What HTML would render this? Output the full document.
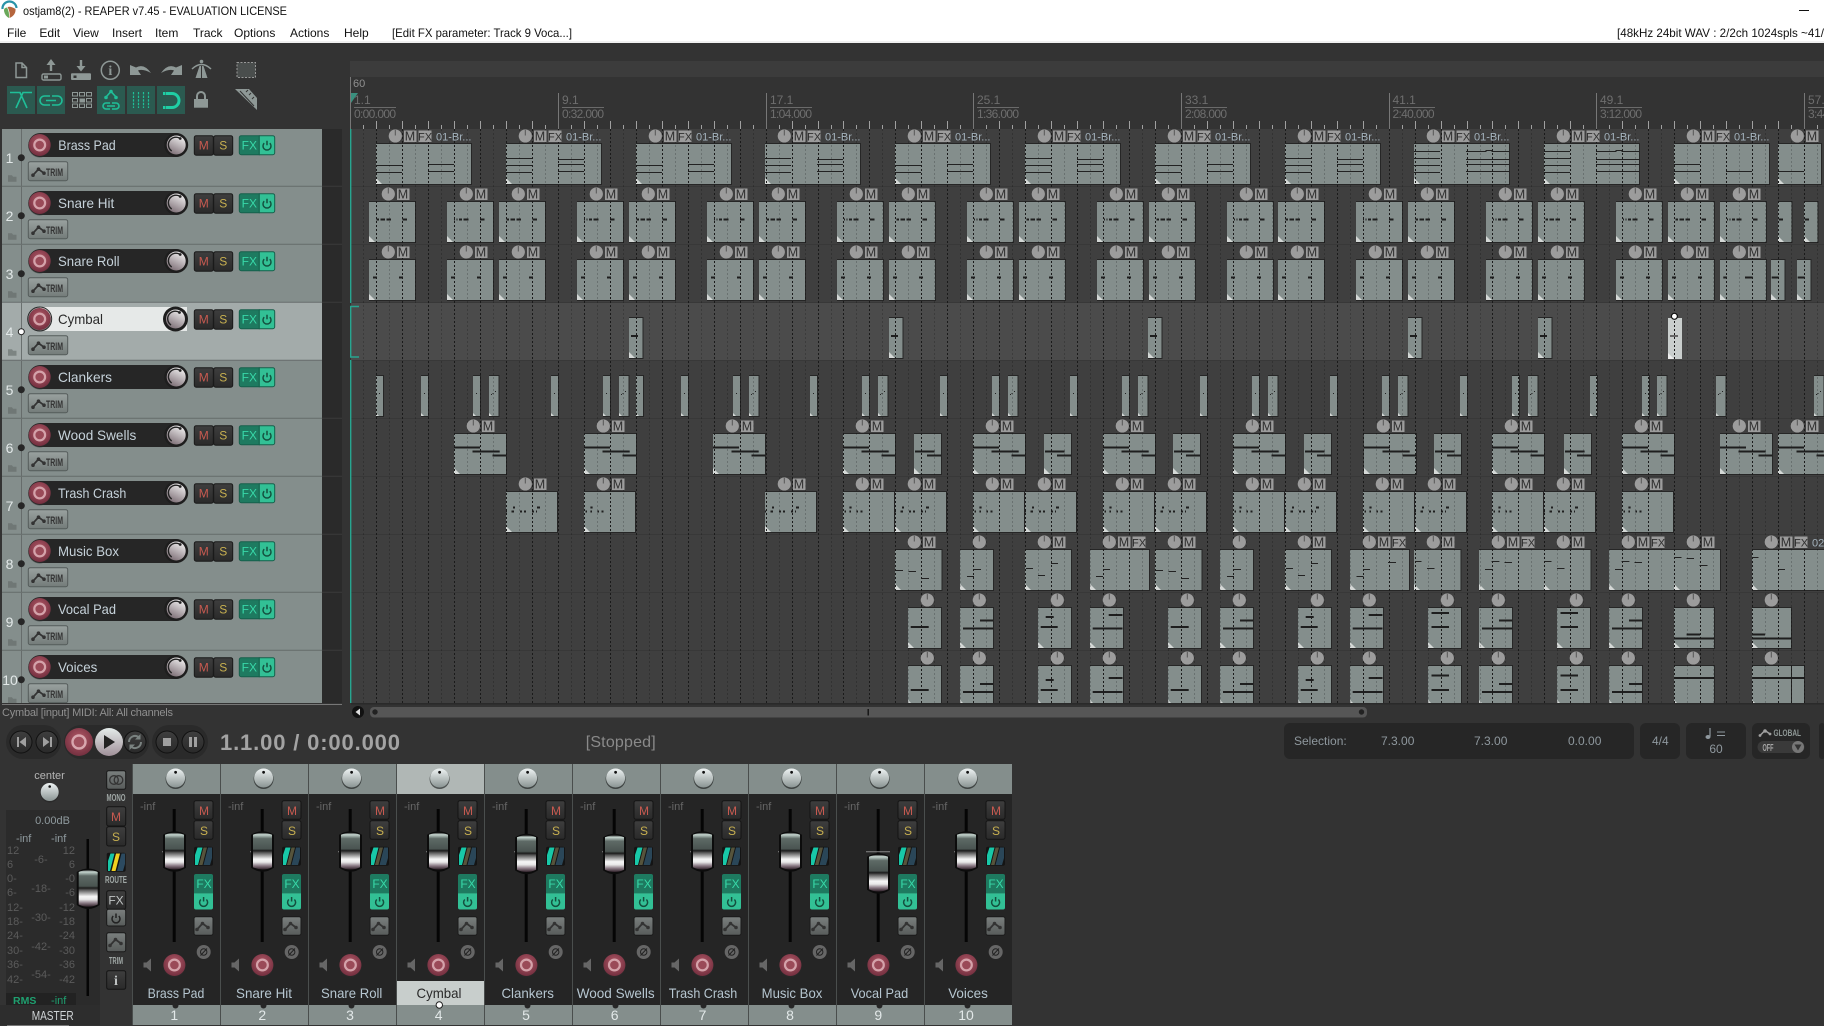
<!DOCTYPE html>
<html><head><meta charset="utf-8"><title>REAPER</title>
<style>
html,body{margin:0;padding:0;background:#333;width:1824px;height:1026px;overflow:hidden}
svg{display:block}
text{font-family:"Liberation Sans",sans-serif}
.wt{font-size:12px;fill:#111}
.b{fill:#848e8c}.d{fill:#262626}
.n1{stroke:#222;stroke-width:1;fill:none}
.n2{stroke:#1e1e1e;stroke-width:2;fill:none}
.ki{fill:#9c9c9c}
.m{font-size:12.5px;fill:#2f2f2f;text-anchor:middle}
.fx{font-size:11px;fill:#2f2f2f;text-anchor:middle}
.lb{font-size:11px;fill:#a3b2bc}
.rl{font-size:12px;fill:#6e6e6e}
.nm{font-size:14px;fill:#c6d2da}
.tn{font-size:14px;fill:#e2e8e8;text-anchor:middle}
.tm{font-size:12px;fill:#c85a50;text-anchor:middle}
.ts{font-size:12px;fill:#c8b050;text-anchor:middle}
.tf{font-size:12px;fill:#38d8a8;text-anchor:middle}
.tr{font-size:11px;fill:#333;font-weight:bold}
.inf{font-size:11px;fill:#666}
.cn{font-size:14px;fill:#b6c6d0;text-anchor:middle}
.sc{font-size:11px;fill:#5b5b5b}
.gy{fill:#8e9896}
.gs{fill:none;stroke:#8e9896;stroke-width:1.5}
.te{fill:none;stroke:#1fbf98;stroke-width:1.6}
.tb{fill:#2b5a50}
.lab{font-size:10px;font-weight:bold;fill:#a0a8a6;text-anchor:middle}
.sel{font-size:12px;fill:#8f989e}
</style></head><body>
<svg width="1824" height="1026" viewBox="0 0 1824 1026">
<defs>
<linearGradient id="kn" x1="0" y1="0" x2="0" y2="1"><stop offset="0" stop-color="#eef3f3"/><stop offset="1" stop-color="#8a9493"/></linearGradient>
<linearGradient id="kt" x1="0.8" y1="0" x2="0.3" y2="1"><stop offset="0" stop-color="#f4f4f4"/><stop offset="1" stop-color="#7d6f76"/></linearGradient>
<radialGradient id="rc" cx=".5" cy=".4" r=".65"><stop offset="0" stop-color="#b45a68"/><stop offset="1" stop-color="#6e2c3c"/></radialGradient>
<linearGradient id="bt" x1="0" y1="0" x2="0" y2="1"><stop offset="0" stop-color="#3e3e3e"/><stop offset="1" stop-color="#2a2a2a"/></linearGradient>
<linearGradient id="tg" x1="0" y1="0" x2="0" y2="1"><stop offset="0" stop-color="#9aa2a0"/><stop offset="1" stop-color="#747c7a"/></linearGradient>
<linearGradient id="fd" x1="0" y1="0" x2="0" y2="1">
<stop offset="0" stop-color="#222"/><stop offset=".05" stop-color="#c8d8d2"/><stop offset=".16" stop-color="#5e6a66"/><stop offset=".44" stop-color="#4a5451"/><stop offset=".49" stop-color="#1c1c1c"/><stop offset=".54" stop-color="#555"/><stop offset=".72" stop-color="#f6f6f6"/><stop offset=".8" stop-color="#e8e8e8"/><stop offset=".9" stop-color="#8a7a84"/><stop offset="1" stop-color="#2e2028"/></linearGradient>
<linearGradient id="pl" x1="0" y1="0" x2="0" y2="1"><stop offset="0" stop-color="#e4ecea"/><stop offset="1" stop-color="#a09099"/></linearGradient>
<linearGradient id="gb" x1="0" y1="0" x2="0" y2="1"><stop offset="0" stop-color="#7a7f7e"/><stop offset="1" stop-color="#585c5b"/></linearGradient>
<clipPath id="ca"><rect x="351" y="129" width="1473" height="574"/></clipPath>
<clipPath id="cl"><rect x="0" y="129" width="342" height="574"/></clipPath>
<clipPath id="rt"><rect x="351" y="121" width="1473" height="8"/></clipPath>
<clipPath id="rs"><rect x="351" y="125" width="1473" height="4"/></clipPath>
<clipPath id="gc"><rect x="351" y="129" width="1473" height="574"/></clipPath>
<clipPath id="ce"><rect x="351" y="77" width="1473" height="60"/></clipPath>
<clipPath id="hr"><rect x="351" y="129" width="1473" height="14"/><rect x="351" y="187" width="1473" height="14"/><rect x="351" y="245" width="1473" height="14"/><rect x="351" y="419" width="1473" height="14"/><rect x="351" y="477" width="1473" height="14"/><rect x="351" y="535" width="1473" height="14"/><rect x="351" y="593" width="1473" height="14"/><rect x="351" y="651" width="1473" height="14"/></clipPath>

<path id="gm" d="M376.5 121V703M402.5 121V703M428.5 121V703M454.5 121V703M480.5 121V703M506.5 121V703M532.5 121V703M558.5 121V703M584.5 121V703M610.5 121V703M636.5 121V703M662.5 121V703M688.5 121V703M714.5 121V703M740.5 121V703M766.5 121V703M792.5 121V703M818.5 121V703M843.5 121V703M869.5 121V703M895.5 121V703M921.5 121V703M947.5 121V703M973.5 121V703M999.5 121V703M1025.5 121V703M1051.5 121V703M1077.5 121V703M1103.5 121V703M1129.5 121V703M1155.5 121V703M1181.5 121V703M1207.5 121V703M1233.5 121V703M1259.5 121V703M1285.5 121V703M1311.5 121V703M1337.5 121V703M1363.5 121V703M1389.5 121V703M1415.5 121V703M1441.5 121V703M1467.5 121V703M1492.5 121V703M1518.5 121V703M1544.5 121V703M1570.5 121V703M1596.5 121V703M1622.5 121V703M1648.5 121V703M1674.5 121V703M1700.5 121V703M1726.5 121V703M1752.5 121V703M1778.5 121V703M1804.5 121V703" fill="none"/>
<path id="gh" d="M363.5 121V703M389.5 121V703M415.5 121V703M441.5 121V703M467.5 121V703M493.5 121V703M519.5 121V703M545.5 121V703M571.5 121V703M597.5 121V703M623.5 121V703M649.5 121V703M675.5 121V703M701.5 121V703M727.5 121V703M753.5 121V703M779.5 121V703M805.5 121V703M831.5 121V703M856.5 121V703M882.5 121V703M908.5 121V703M934.5 121V703M960.5 121V703M986.5 121V703M1012.5 121V703M1038.5 121V703M1064.5 121V703M1090.5 121V703M1116.5 121V703M1142.5 121V703M1168.5 121V703M1194.5 121V703M1220.5 121V703M1246.5 121V703M1272.5 121V703M1298.5 121V703M1324.5 121V703M1350.5 121V703M1376.5 121V703M1402.5 121V703M1428.5 121V703M1454.5 121V703M1480.5 121V703M1505.5 121V703M1531.5 121V703M1557.5 121V703M1583.5 121V703M1609.5 121V703M1635.5 121V703M1661.5 121V703M1687.5 121V703M1713.5 121V703M1739.5 121V703M1765.5 121V703M1791.5 121V703M1817.5 121V703" fill="none"/>

<path id="c" d="M0 41V35L6 41Z" fill="#d4d8d6"/>
<g id="K"><circle class="ki" cx="19.3" cy="-7" r="6.5"/><path d="M19.3-13V-7.5" stroke="#555" fill="none"/></g>
<g id="H"><use href="#K"/><rect class="ki" x="28" y="-12.5" width="12.5" height="11.5"/></g>
<g id="F"><use href="#H"/><rect class="ki" x="42.5" y="-12.5" width="13" height="11.5"/></g>

<!-- track 1 -->
<g id="a1"><rect class="d" width="96" height="42"/><rect class="b" y="1" width="95" height="40"/><use href="#c"/><path class="n1" d="M0 22.5H26M0 29.5H26M52 21.5H78M52 28.5H78"/><use href="#F"/></g>
<g id="b1"><rect class="d" width="96" height="42"/><rect class="b" y="1" width="95" height="40"/><use href="#c"/><path class="n1" d="M0 15.5H26M0 22.5H26M0 29.5H26M52 16.5H78M52 21.5H78M52 28.5H78"/><use href="#F"/></g>
<g id="c1"><rect class="d" width="96" height="42"/><rect class="b" y="1" width="95" height="40"/><use href="#c"/><path class="n1" d="M0 8.5H26M0 15.5H26M0 22.5H26M0 29.5H26M52 8.5H72V7.5H78V8.5H95M52 16.5H95M52 21.5H95M52 28.5H95"/><use href="#F"/></g>
<g id="d1"><rect class="d" width="96" height="42"/><rect class="b" y="1" width="95" height="40"/><use href="#c"/><path class="n1" d="M0 21.5H26M0 28.5H26M52 28.5H78"/><use href="#F"/></g>
<g id="e1"><rect class="d" width="44" height="42"/><rect class="b" y="1" width="43" height="40"/><use href="#c"/><path class="n1" d="M0 28.5H26"/><use href="#H"/></g>
<!-- track 2 -->
<g id="a2"><rect class="d" width="47" height="42"/><rect class="b" y="1" width="46" height="40"/><use href="#c"/><path class="n2" d="M7.5 18.5H10M11.5 18.5H16M17.5 18.5H22M33.5 18.5H38"/><use href="#H"/></g>
<g id="b2"><rect class="d" width="47" height="42"/><rect class="b" y="1" width="46" height="40"/><use href="#c"/><path class="n2" d="M7 18.5H8M9.5 18.5H10.5M12 18.5H15M16.5 18.5H21.5M33 18.5H37.5"/><use href="#H"/></g>
<g id="s2"><rect class="d" width="14.5" height="42"/><rect class="b" y="1" width="13.5" height="40"/><use href="#c"/><path class="n2" d="M.7 18.5H5"/></g>
<!-- track 3 -->
<g id="a3"><rect class="d" width="47" height="42"/><rect class="b" y="1" width="46" height="40"/><use href="#c"/><path class="n2" d="M4 18.5H8M30 18.5H34"/><use href="#H"/></g>
<g id="c3"><rect class="d" width="47" height="42"/><rect class="b" y="1" width="46" height="40"/><use href="#c"/><path class="n2" d="M3.3 18.5H7M25 18.5H32.7"/><use href="#H"/></g>
<g id="s3"><rect class="d" width="14.5" height="42"/><rect class="b" y="1" width="13.5" height="40"/><use href="#c"/><path class="n2" d="M.7 18.5H7.7"/></g>
<!-- track 4 -->
<g id="a4"><rect class="d" width="14.5" height="42"/><rect class="b" y="1" width="13.5" height="40"/><use href="#c"/><path class="n2" d="M2 19H9"/></g>
<!-- track 5 -->
<g id="s5"><rect class="d" width="8" height="42"/><rect class="b" y="1" width="7" height="40"/><path d="M0 41V38L3 41Z" fill="#d4d8d6"/><path class="n1" d="M3.5 18V19"/></g>
<g id="w5"><rect class="d" width="10.5" height="42"/><rect class="b" y="1" width="9.5" height="40"/><path d="M0 41V38L3 41Z" fill="#d4d8d6"/><path class="n1" d="M2 19.5H3M4 19V18M6 16.5H7"/></g>
<!-- track 6 -->
<g id="a6"><rect class="d" width="53" height="42"/><rect class="b" y="1" width="52" height="40"/><use href="#c"/><path class="n2" d="M0 14.5H26M18.5 18.5H45.7M38.5 22.5H52"/><use href="#H"/></g>
<g id="s6"><rect class="d" width="28" height="42"/><rect class="b" y="1" width="27" height="40"/><use href="#c"/><path class="n2" d="M1 18.5H20.6M13 22.5H27"/></g>
<!-- track 7 -->
<g id="a7"><rect class="d" width="52" height="42"/><rect class="b" y="1" width="51" height="40"/><use href="#c"/><path class="n2" d="M0 20.5H1M5.5 20.5H8M7 16.5H9M14 20.5H16M18 20.5H20M26 20.5H28M31 16.5H34M30 20.5H31"/><use href="#H"/></g>
<g id="b7"><rect class="d" width="52" height="42"/><rect class="b" y="1" width="51" height="40"/><use href="#c"/><path class="n2" d="M1.5 20.5H3M6.4 20.5H8M6.4 16.5H8.6M13.4 20.5H15M17.5 20.5H19.5"/><use href="#H"/></g>
<!-- track 8 -->
<g id="p8"><rect class="d" width="47.5" height="42"/><rect class="b" y="1" width="46.5" height="40"/><use href="#c"/><path class="n1" d="M1 21.5H8M13.5 22.5H21M27 29.5H34"/><use href="#H"/></g>
<g id="q8"><rect class="d" width="34" height="42"/><rect class="b" y="1" width="33" height="40"/><use href="#c"/><path class="n1" d="M7 27.5H14M14 20.5H21"/><use href="#K"/></g>
<g id="r8"><rect class="d" width="47" height="42"/><rect class="b" y="1" width="46" height="40"/><use href="#c"/><path class="n1" d="M1 19.5H8M13 26.5H20M26 14.5H33"/><use href="#H"/></g>
<g id="u8"><rect class="d" width="60" height="42"/><rect class="b" y="1" width="59" height="40"/><use href="#c"/><path class="n1" d="M6 27.5H13M13 20.5H20"/><use href="#F"/></g>
<g id="v8"><rect class="d" width="60" height="42"/><rect class="b" y="1" width="59" height="40"/><use href="#c"/><path class="n1" d="M6.5 27.5H13.5M13 20.5H20M38 13.5H46"/><use href="#F"/></g>
<g id="t8"><rect class="d" width="47.5" height="42"/><rect class="b" y="1" width="46.5" height="40"/><use href="#c"/><path class="n1" d="M1 12.5H7.5M13 19.5H20.5"/><use href="#H"/></g>
<g id="x8"><rect class="d" width="66" height="42"/><rect class="b" y="1" width="65" height="40"/><use href="#c"/><path class="n1" d="M6 20.5H14M12.6 12.5H20.4M25.5 13.5H33"/><use href="#F"/></g>
<g id="y8"><rect class="d" width="47" height="42"/><rect class="b" y="1" width="46" height="40"/><use href="#c"/><path class="n1" d="M0 8.5H7.5M12.6 9.5H20M25.5 16.5H33.5"/><use href="#H"/></g>
<g id="z8"><rect class="d" width="81" height="42"/><rect class="b" y="1" width="80" height="40"/><use href="#c"/><path class="n1" d="M0 8.5H6.5M26 20.5H33"/><use href="#F"/></g>
<!-- track 9 -->
<rect id="f33" width="34" height="42" class="d"/>
<g id="A9"><use href="#f33"/><rect class="b" y="1" width="33" height="40"/><use href="#c"/><path class="n2" d="M2.7 20H20.7"/><use href="#K"/></g>
<g id="B9"><use href="#f33"/><rect class="b" y="1" width="33" height="40"/><use href="#c"/><path class="n2" d="M20 13.5H33M3 21.5H33"/><use href="#K"/></g>
<g id="C9"><use href="#f33"/><rect class="b" y="1" width="33" height="40"/><use href="#c"/><path class="n2" d="M7.7 10H15.7M2.7 20H19.7"/><use href="#K"/></g>
<g id="D9"><use href="#f33"/><rect class="b" y="1" width="33" height="40"/><use href="#c"/><path class="n2" d="M18.7 8H32.5M2.7 21.5H32.5"/><use href="#K"/></g>
<g id="E9"><use href="#f33"/><rect class="b" y="1" width="33" height="40"/><use href="#c"/><path class="n2" d="M3.5 6H21M3.5 20H21"/><use href="#K"/></g>
<g id="F9"><rect class="d" width="41" height="42"/><rect class="b" y="1" width="40" height="40"/><use href="#c"/><path class="n2" d="M12.6 27.5H26M0 31.5H40"/><use href="#K"/></g>
<g id="G9"><rect class="d" width="40" height="42"/><rect class="b" y="1" width="39" height="40"/><use href="#c"/><path class="n2" d="M0 27.5H13M0 31.5H39"/><use href="#K"/></g>
<!-- track 10 -->
<g id="A0"><use href="#f33"/><rect class="b" y="1" width="33" height="40"/><use href="#c"/><path class="n2" d="M2.7 25H20.7"/><use href="#K"/></g>
<g id="B0"><use href="#f33"/><rect class="b" y="1" width="33" height="40"/><use href="#c"/><path class="n2" d="M20 19H33M3 27H33"/><use href="#K"/></g>
<g id="C0"><use href="#f33"/><rect class="b" y="1" width="33" height="40"/><use href="#c"/><path class="n2" d="M7.7 15H15.7M2.7 25H19.7"/><use href="#K"/></g>
<g id="D0"><use href="#f33"/><rect class="b" y="1" width="33" height="40"/><use href="#c"/><path class="n2" d="M18.7 13H32.5M2.7 27H32.5"/><use href="#K"/></g>
<g id="E0"><use href="#f33"/><rect class="b" y="1" width="33" height="40"/><use href="#c"/><path class="n2" d="M3.5 10.5H21M3.5 25H21"/><use href="#K"/></g>
<g id="F0"><rect class="d" width="41" height="42"/><rect class="b" y="1" width="40" height="40"/><use href="#c"/><path class="n2" d="M0 13H40"/><use href="#K"/></g>
<g id="G0"><rect class="d" width="53" height="42"/><rect class="b" y="1" width="52" height="40"/><use href="#c"/><path class="n2" d="M0 13H52"/><path d="M39.5 1V41" stroke="#222" fill="none"/><use href="#K"/></g>

<g id="rec"><circle r="11.5" fill="#2a2a2a" opacity=".5" cy="1"/><circle r="11" fill="url(#rc)"/><circle r="5.4" fill="#9a4a58" stroke="#d4a2aa" stroke-width="2.2"/></g>
<g id="tk"><circle r="12" fill="#1e1e1e"/><circle r="9.5" fill="url(#kt)"/><path d="M-4.5 6A7.5 7.5 0 0 1 4-6.5" fill="none" stroke="#222" stroke-width="1.4"/><circle cx="4" cy="-6.5" r="1.4" fill="#222"/></g>
<path id="pw" d="M-2.8-2.5A4 4 0 1 0 2.8-2.5M0-5V-.5" fill="none" stroke-width="1.5"/>
<g id="ti"><path d="M-6.5 3.5L-1 -2.5L4.5 1.5" fill="none" stroke="#333" stroke-width="1.8"/><circle cx="-6.5" cy="3.5" r="1.8" fill="#333"/><circle cx="-1" cy="-2.5" r="1.8" fill="#333"/><circle cx="4.5" cy="1.5" r="1.8" fill="#333"/></g>

<!-- TCP row -->
<g id="r">
<rect x="2" width="320" height="58" fill="#848e8c"/>
<path d="M2 57.5H322M21.5 0V57" stroke="#666c6b" fill="none"/>
<path d="M322 57.5H342" stroke="#3a3a3a"/>
<rect x="28.3" y="4.3" width="159.4" height="24" rx="12" fill="#262626"/>
<use href="#rec" x="39.7" y="16.3"/>
<use href="#tk" x="176.2" y="16.3"/>
<rect x="194.3" y="7" width="19" height="19.5" rx="2" fill="url(#bt)" stroke="#1a1a1a"/>
<rect x="213.7" y="7" width="19" height="19.5" rx="2" fill="url(#bt)" stroke="#1a1a1a"/>
<path d="M239.3 9a2 2 0 0 1 2-2H259.3V26H241.3a2 2 0 0 1-2-2Z" fill="#1e7a60" stroke="#17604c"/>
<path d="M259.3 7H272.7a2 2 0 0 1 2 2V24a2 2 0 0 1-2 2H259.3Z" fill="#32c095" stroke="#17604c"/>
<use href="#pw" x="267" y="17" stroke="#14503f"/>
<rect x="28.3" y="33" width="39.4" height="19" rx="2" fill="url(#tg)" stroke="#555c5b"/>
<use href="#ti" x="39.5" y="43"/>
<circle cx="21.3" cy="29" r="3.5" fill="#262626"/>
<path d="M8 53V46.5H12L13 48H16.5V53Z" fill="#6f7775"/>
</g>

<!-- Mixer channel -->
<g id="ch">
<rect width="88" height="30" y="764" fill="#848e8c"/>
<rect width="88" height="211" y="794" fill="#252525"/>
<rect width="88" height="20" y="1005" fill="#848e8c"/>
<path d="M.5 764V1025" stroke="#4a4e4d" fill="none"/>
<circle cx="43.6" cy="779" r="10" fill="#3f4443"/><circle cx="43.6" cy="778" r="9.5" fill="url(#kn)"/><circle cx="43.6" cy="772.3" r="1.4" fill="#111"/>
<rect x="40.7" y="809" width="3" height="133" fill="#050505"/>
<path d="M30 851.7H54" stroke="#888" fill="none"/>
<rect x="62" y="800.7" width="19" height="18.6" rx="2" fill="url(#bt)" stroke="#141414"/>
<rect x="62" y="820.7" width="19" height="18.6" rx="2" fill="url(#bt)" stroke="#141414"/>
<rect x="62" y="846.7" width="19" height="19" rx="2" fill="#141414"/>
<path d="M63 865V855L65.5 847.5H70.5L66 865Z" fill="#18c8a8"/><path d="M67 865L71.5 847.5H75L70.5 865Z" fill="#56543c"/><path d="M71.5 865L76 847.5H80V858L78 865Z" fill="#2a4658"/>
<path d="M62 876a2 2 0 0 1 2-2H79a2 2 0 0 1 2 2V893.3H62Z" fill="#1e7a60"/>
<path d="M62 893.3H81V907.5a2 2 0 0 1-2 2H64a2 2 0 0 1-2-2Z" fill="#32c095"/>
<use href="#pw" x="71.6" y="902" stroke="#14503f"/>
<rect x="62" y="916.7" width="19" height="18.6" rx="2" fill="url(#gb)" stroke="#1a1a1a"/>
<use href="#ti" x="71.5" y="926"/>
<circle cx="71.7" cy="952" r="7" fill="#666"/><circle cx="71.7" cy="952" r="3.2" fill="none" stroke="#222"/><path d="M68.5 955.5L75 948.5" stroke="#222"/>
<path d="M11.5 962.5H14.5L19 958.5V971.5L14.5 967.5H11.5Z" fill="#666"/>
<use href="#rec" x="42.4" y="965"/>
<circle cx="43.5" cy="1005.5" r="3" fill="#262626"/>
</g>
<g id="fc"><path d="M-1 4Q10.5-3 22 4V37Q10.5 45 -1 37Z" fill="#0c0c0c"/><path d="M1 4Q10.5 0 20 4V36.5Q10.5 41 1 36.5Z" fill="url(#fd)"/></g>
<g id="bd"><circle r="11.5" fill="#111"/><circle r="10.5" fill="url(#bt)"/></g>
</defs>

<rect width="1824" height="1026" fill="#333"/>
<!-- title/menu -->
<rect width="1824" height="41" fill="#fff"/><rect y="41" width="1824" height="2" fill="#f0f0f0"/>
<path d="M7 7.5Q3.5 8 4 11Q5 16 9 18Q9.5 12 7 7.5Z" fill="#6aa85a"/><path d="M9.5 18Q16 15 15.5 9Q11 6 7.5 7Q10.5 12 9.5 18Z" fill="#b5653d"/><path d="M2.5 9A7 7 0 0 1 16.5 8" fill="none" stroke="#2a93a8" stroke-width="2.2"/>
<text class="wt" x="23" y="15" textLength="264" lengthAdjust="spacingAndGlyphs">ostjam8(2) - REAPER v7.45 - EVALUATION LICENSE</text>
<text class="wt" x="7" y="37">File</text><text class="wt" x="39.4" y="37">Edit</text><text class="wt" x="73" y="37">View</text><text class="wt" x="112" y="37">Insert</text><text class="wt" x="155" y="37">Item</text><text class="wt" x="193" y="37">Track</text><text class="wt" x="234" y="37">Options</text><text class="wt" x="290" y="37">Actions</text><text class="wt" x="344" y="37">Help</text>
<text class="wt" x="392" y="37" textLength="180" lengthAdjust="spacingAndGlyphs">[Edit FX parameter: Track 9 Voca...]</text>
<text class="wt" x="1617" y="37" textLength="207" lengthAdjust="spacingAndGlyphs">[48kHz 24bit WAV : 2/2ch 1024spls ~41/</text>
<rect x="1799" y="10" width="10" height="1" fill="#111"/>

<!-- toolbar -->
<g>
<path class="gs" d="M16 63H22L26.5 67.5V77.5H16ZM22 63V67.5H26.5"/>
<path class="gy" d="M51 59L55.5 65H52.2V71H49.8V65H46.5Z"/><rect x="42" y="74" width="19" height="6" rx="1.5" fill="none" stroke="#8e9896" stroke-width="1.4"/><rect x="44" y="75.5" width="4" height="3" fill="#8e9896"/>
<path class="gy" d="M79.8 60H82.2V66H85.5L81 71.5L76.5 66H79.8Z"/><rect class="gy" x="71" y="73.3" width="20" height="6.7" rx="1"/><rect x="73.5" y="75.5" width="3" height="2.5" fill="#333"/>
<circle class="gs" cx="110.3" cy="70.3" r="9"/><text x="110.3" y="75" font-size="14" font-weight="bold" fill="#8e9896" text-anchor="middle" style="font-family:'Liberation Serif',serif">i</text>
<path class="gy" d="M130 65L136 67.5Q144 63 151 73Q143 68.5 138 70.5L141 75H130Z"/>
<path class="gy" d="M182 65L176 67.5Q168 63 161 73Q169 68.5 174 70.5L171 75H182Z"/>
<circle class="gy" cx="201.5" cy="61.5" r="1.8"/><path class="gs" d="M192 69Q201.5 60 211 69"/><path class="gy" d="M195.5 78L199.5 66H201V78ZM202 78V66H203.5L207.5 78Z"/>
<rect x="237" y="62.5" width="18.5" height="15" fill="#4a4e4d" stroke="#999" stroke-dasharray="2 1.5"/>
<rect class="tb" x="7" y="86" width="28" height="28"/><rect class="tb" x="37" y="86" width="28" height="28"/><rect class="tb" x="97" y="86" width="28" height="28"/><rect class="tb" x="127" y="86" width="28" height="28"/><rect class="tb" x="157" y="86" width="28" height="28"/>
<path class="te" d="M10 92.5H20L27 108M32 92.5H23L16 108"/>
<path class="te" d="M50 96H44.5a4.5 4.5 0 0 0 0 9H50M52 96H57.5a4.5 4.5 0 0 1 0 9H52M46 100.5H56"/>
<path fill="none" stroke="#8e9896" d="M72.5 92.5h5v3.5h-5zM79.5 92.5h5v3.5h-5zM86.5 92.5h5v3.5h-5zM72.5 98.5h5v3.5h-5zM86.5 98.5h5v3.5h-5zM72.5 104h5v3.5h-5zM79.5 104h5v3.5h-5zM86.5 104h5v3.5h-5z"/><rect class="gy" x="79.5" y="98.5" width="5.5" height="4"/>
<path class="te" d="M106 97L111 91.5L116 97"/><circle cx="106" cy="97.5" r="1.8" fill="#1fbf98"/><circle cx="111" cy="91.5" r="1.8" fill="#1fbf98"/><circle cx="116" cy="97.5" r="1.8" fill="#1fbf98"/><path class="te" d="M110 103H106a3 3 0 0 0 0 6H110M112 103H116a3 3 0 0 1 0 6H112M107 106H115"/>
<path d="M133.5 92V108M138.5 92V108M143.5 92V108M148.5 92V108" fill="none" stroke="#1fbf98" stroke-width="1.2" stroke-dasharray="2.4 1.2"/>
<path d="M166 93.5H172a7 7 0 0 1 0 14H166" fill="none" stroke="#1fcfa5" stroke-width="3"/><path d="M163 92h2.5v3h-2.5zM163 106h2.5v3h-2.5z" fill="#1fcfa5"/>
<rect class="gy" x="194" y="99" width="14" height="8.7"/><path d="M197 99V96a4 4 0 0 1 8 0V99" fill="none" stroke="#8e9896" stroke-width="2"/>
<path class="gy" d="M235 89H249L257 98V110Z"/><path d="M246 92L248 90M249 95L251 93M252 99L254 97" stroke="#333" fill="none"/><path d="M240 91L254 106" stroke="#333" fill="none"/>
</g>

<!-- TCP -->
<rect x="322" y="129" width="20" height="574" fill="#2a2a2a"/>
<g clip-path="url(#cl)">
<use href="#r" y="128.7"/><use href="#r" y="186.7"/><use href="#r" y="244.7"/>
<use href="#r" y="360.7"/><use href="#r" y="418.7"/><use href="#r" y="476.7"/><use href="#r" y="534.7"/><use href="#r" y="592.7"/><use href="#r" y="650.7"/>
<g transform="translate(0,302.7)">
<rect x="2" width="320" height="58" fill="#a3abaa"/><path d="M2 57.5H322M21.5 0V57" stroke="#6a706f" fill="none"/>
<rect x="40" y="4.3" width="147" height="24" fill="#e6e9e8"/>
<use href="#rec" x="39.7" y="16.3"/><circle cx="39.7" cy="16.3" r="12" fill="none" stroke="#2a2a2a" stroke-width="1"/>
<circle cx="175.5" cy="16.3" r="12.5" fill="#1e1e1e"/><use href="#tk" x="175.5" y="16.3"/>
<rect x="194.3" y="7" width="19" height="19.5" rx="2" fill="url(#bt)" stroke="#1a1a1a"/><rect x="213.7" y="7" width="19" height="19.5" rx="2" fill="url(#bt)" stroke="#1a1a1a"/>
<path d="M239.3 9a2 2 0 0 1 2-2H259.3V26H241.3a2 2 0 0 1-2-2Z" fill="#1e7a60" stroke="#17604c"/>
<path d="M259.3 7H272.7a2 2 0 0 1 2 2V24a2 2 0 0 1-2 2H259.3Z" fill="#32c095" stroke="#17604c"/><use href="#pw" x="267" y="17" stroke="#14503f"/>
<rect x="28.3" y="33" width="39.4" height="19" rx="2" fill="url(#tg)" stroke="#555c5b"/><use href="#ti" x="39.5" y="43"/>
<circle cx="21.3" cy="29" r="3" fill="#fff" stroke="#222"/>
<path d="M8 53V46.5H12L13 48H16.5V53Z" fill="#7c8482"/>
</g>
<text class="nm" x="58.3" y="150" textLength="57.4" lengthAdjust="spacingAndGlyphs">Brass Pad</text><text class="nm" x="58" y="208" textLength="56.3" lengthAdjust="spacingAndGlyphs">Snare Hit</text><text class="nm" x="58" y="266" textLength="61.6" lengthAdjust="spacingAndGlyphs">Snare Roll</text><text x="58" y="324" font-size="14" fill="#2a2a2a" textLength="45" lengthAdjust="spacingAndGlyphs">Cymbal</text><text class="nm" x="58" y="382" textLength="54" lengthAdjust="spacingAndGlyphs">Clankers</text><text class="nm" x="58" y="440" textLength="78.3" lengthAdjust="spacingAndGlyphs">Wood Swells</text><text class="nm" x="58" y="498" textLength="68.3" lengthAdjust="spacingAndGlyphs">Trash Crash</text><text class="nm" x="58" y="556" textLength="61" lengthAdjust="spacingAndGlyphs">Music Box</text><text class="nm" x="58" y="614" textLength="58" lengthAdjust="spacingAndGlyphs">Vocal Pad</text><text class="nm" x="58" y="672" textLength="39.3" lengthAdjust="spacingAndGlyphs">Voices</text>
<text class="tn" x="9.5" y="163">1</text><text class="tn" x="9.5" y="221">2</text><text class="tn" x="9.5" y="279">3</text><text class="tn" x="9.5" y="337">4</text><text class="tn" x="9.5" y="395">5</text><text class="tn" x="9.5" y="453">6</text><text class="tn" x="9.5" y="511">7</text><text class="tn" x="9.5" y="569">8</text><text class="tn" x="9.5" y="627">9</text><text class="tn" x="10" y="685">10</text>
<text class="tm" y="149.5" x="203.8">M</text><text class="tm" y="207.5" x="203.8">M</text><text class="tm" y="265.5" x="203.8">M</text><text class="tm" y="323.5" x="203.8">M</text><text class="tm" y="381.5" x="203.8">M</text><text class="tm" y="439.5" x="203.8">M</text><text class="tm" y="497.5" x="203.8">M</text><text class="tm" y="555.5" x="203.8">M</text><text class="tm" y="613.5" x="203.8">M</text><text class="tm" y="671.5" x="203.8">M</text>
<text class="ts" y="149.5" x="223.2">S</text><text class="ts" y="207.5" x="223.2">S</text><text class="ts" y="265.5" x="223.2">S</text><text class="ts" y="323.5" x="223.2">S</text><text class="ts" y="381.5" x="223.2">S</text><text class="ts" y="439.5" x="223.2">S</text><text class="ts" y="497.5" x="223.2">S</text><text class="ts" y="555.5" x="223.2">S</text><text class="ts" y="613.5" x="223.2">S</text><text class="ts" y="671.5" x="223.2">S</text>
<text class="tf" y="149.5" x="249.3">FX</text><text class="tf" y="207.5" x="249.3">FX</text><text class="tf" y="265.5" x="249.3">FX</text><text class="tf" y="323.5" x="249.3">FX</text><text class="tf" y="381.5" x="249.3">FX</text><text class="tf" y="439.5" x="249.3">FX</text><text class="tf" y="497.5" x="249.3">FX</text><text class="tf" y="555.5" x="249.3">FX</text><text class="tf" y="613.5" x="249.3">FX</text><text class="tf" y="671.5" x="249.3">FX</text>
<text class="tr" x="46" y="176" textLength="17" lengthAdjust="spacingAndGlyphs">TRIM</text><text class="tr" x="46" y="234" textLength="17" lengthAdjust="spacingAndGlyphs">TRIM</text><text class="tr" x="46" y="292" textLength="17" lengthAdjust="spacingAndGlyphs">TRIM</text><text class="tr" x="46" y="350" textLength="17" lengthAdjust="spacingAndGlyphs">TRIM</text><text class="tr" x="46" y="408" textLength="17" lengthAdjust="spacingAndGlyphs">TRIM</text><text class="tr" x="46" y="466" textLength="17" lengthAdjust="spacingAndGlyphs">TRIM</text><text class="tr" x="46" y="524" textLength="17" lengthAdjust="spacingAndGlyphs">TRIM</text><text class="tr" x="46" y="582" textLength="17" lengthAdjust="spacingAndGlyphs">TRIM</text><text class="tr" x="46" y="640" textLength="17" lengthAdjust="spacingAndGlyphs">TRIM</text><text class="tr" x="46" y="698" textLength="17" lengthAdjust="spacingAndGlyphs">TRIM</text>
</g>

<!-- arrange -->
<rect x="350" y="61" width="1474" height="16" fill="#3c3c3c"/>
<rect x="351" y="129" width="1473" height="574" fill="#3f3f3f"/>
<rect x="351" y="303" width="1473" height="58" fill="#4b4b4b"/>
<path d="M351 186.5H1824M351 244.5H1824M351 302.5H1824M351 360.5H1824M351 418.5H1824M351 476.5H1824M351 534.5H1824M351 592.5H1824M351 650.5H1824" stroke="#383838" fill="none"/>
<!-- ruler -->
<path d="M350.5 77V129" stroke="#777" fill="none"/>
<use href="#gm" clip-path="url(#rt)" stroke="#a0a0a0"/>
<use href="#gh" clip-path="url(#rs)" stroke="#a0a0a0"/>
<path d="M558.5 93V129M766.5 93V129M973.5 93V129M1181.5 93V129M1389.5 93V129M1596.5 93V129M1804.5 93V129" stroke="#777" fill="none"/>
<path d="M351 93H358L351 103Z" fill="#3a8f7e"/>
<text x="353" y="87" font-size="11" fill="#909090">60</text>
<g clip-path="url(#ce)">
<path d="M354 107.5H396M562 107.5H604M770 107.5H812M977 107.5H1019M1185 107.5H1227M1393 107.5H1435M1600 107.5H1642M1808 107.5H1850" stroke="#6a6a6a" fill="none"/>
<text class="rl" x="354" y="104">1.1</text><text class="rl" x="562" y="104">9.1</text><text class="rl" x="770" y="104">17.1</text><text class="rl" x="977" y="104">25.1</text><text class="rl" x="1185" y="104">33.1</text><text class="rl" x="1392.5" y="104">41.1</text><text class="rl" x="1600" y="104">49.1</text><text class="rl" x="1808" y="104">57.1</text>
<text class="rl" x="354" y="118" textLength="42">0:00.000</text><text class="rl" x="562" y="118" textLength="42">0:32.000</text><text class="rl" x="770" y="118" textLength="42">1:04.000</text><text class="rl" x="977" y="118" textLength="42">1:36.000</text><text class="rl" x="1185" y="118" textLength="42">2:08.000</text><text class="rl" x="1392.5" y="118" textLength="42">2:40.000</text><text class="rl" x="1600" y="118" textLength="42">3:12.000</text><text class="rl" x="1808" y="118" textLength="42">3:44.000</text>
</g>

<g clip-path="url(#ca)"><g id="items">
<!-- track 1 -->
<use href="#a1" x="376" y="143"/><use href="#b1" x="506" y="143"/><use href="#a1" x="636" y="143"/><use href="#b1" x="765" y="143"/><use href="#a1" x="895" y="143"/><use href="#b1" x="1025" y="143"/><use href="#a1" x="1155" y="143"/><use href="#b1" x="1285" y="143"/><use href="#c1" x="1414" y="143"/><use href="#c1" x="1544" y="143"/><use href="#d1" x="1674" y="143"/><use href="#e1" x="1778" y="143"/>
<!-- track 2 -->
<use href="#a2" x="369" y="201"/><use href="#b2" x="447" y="201"/><use href="#a2" x="499" y="201"/><use href="#b2" x="577" y="201"/><use href="#a2" x="629" y="201"/><use href="#b2" x="707" y="201"/><use href="#a2" x="759" y="201"/><use href="#b2" x="837" y="201"/><use href="#a2" x="889" y="201"/><use href="#b2" x="967" y="201"/><use href="#a2" x="1019" y="201"/><use href="#b2" x="1097" y="201"/><use href="#a2" x="1149" y="201"/><use href="#b2" x="1227" y="201"/><use href="#a2" x="1278" y="201"/><use href="#b2" x="1356" y="201"/><use href="#a2" x="1408" y="201"/><use href="#b2" x="1486" y="201"/><use href="#a2" x="1538" y="201"/><use href="#b2" x="1616" y="201"/><use href="#a2" x="1668" y="201"/><use href="#b2" x="1720" y="201"/><use href="#s2" x="1778" y="201"/><use href="#s2" x="1804" y="201"/>
<!-- track 3 -->
<use href="#a3" x="369" y="259"/><use href="#a3" x="447" y="259"/><use href="#a3" x="499" y="259"/><use href="#a3" x="577" y="259"/><use href="#a3" x="629" y="259"/><use href="#a3" x="707" y="259"/><use href="#a3" x="759" y="259"/><use href="#a3" x="837" y="259"/><use href="#a3" x="889" y="259"/><use href="#a3" x="967" y="259"/><use href="#a3" x="1019" y="259"/><use href="#a3" x="1097" y="259"/><use href="#a3" x="1149" y="259"/><use href="#a3" x="1227" y="259"/><use href="#a3" x="1278" y="259"/><use href="#a3" x="1356" y="259"/><use href="#a3" x="1408" y="259"/><use href="#a3" x="1486" y="259"/><use href="#a3" x="1538" y="259"/><use href="#a3" x="1616" y="259"/><use href="#a3" x="1668" y="259"/><use href="#c3" x="1720" y="259"/><use href="#s3" x="1771" y="259"/><use href="#s3" x="1797" y="259"/>
<!-- track 4 -->
<use href="#a4" x="629" y="317"/><use href="#a4" x="889" y="317"/><use href="#a4" x="1148" y="317"/><use href="#a4" x="1408" y="317"/><use href="#a4" x="1538" y="317"/>
<rect x="1668" y="318" width="14" height="41" fill="#c9cecd"/><path d="M1668 359V353L1674 359Z" fill="#eee"/><path d="M1670 336H1678" stroke="#666" stroke-width="2"/>
<!-- track 5 -->
<use href="#s5" x="376" y="375"/><use href="#s5" x="421" y="375"/><use href="#s5" x="473" y="375"/><use href="#w5" x="489" y="375"/><use href="#s5" x="551" y="375"/><use href="#s5" x="603" y="375"/><use href="#w5" x="619" y="375"/><use href="#s5" x="636" y="375"/><use href="#s5" x="681" y="375"/><use href="#s5" x="733" y="375"/><use href="#w5" x="749" y="375"/><use href="#s5" x="810" y="375"/><use href="#s5" x="862" y="375"/><use href="#w5" x="878" y="375"/><use href="#s5" x="940" y="375"/><use href="#s5" x="992" y="375"/><use href="#w5" x="1008" y="375"/><use href="#s5" x="1070" y="375"/><use href="#s5" x="1122" y="375"/><use href="#w5" x="1138" y="375"/><use href="#s5" x="1200" y="375"/><use href="#s5" x="1252" y="375"/><use href="#w5" x="1268" y="375"/><use href="#s5" x="1330" y="375"/><use href="#s5" x="1382" y="375"/><use href="#w5" x="1398" y="375"/><use href="#s5" x="1460" y="375"/><use href="#s5" x="1512" y="375"/><use href="#w5" x="1528" y="375"/><use href="#s5" x="1590" y="375"/><use href="#s5" x="1642" y="375"/><use href="#w5" x="1657" y="375"/><use href="#w5" x="1716" y="375"/><use href="#w5" x="1814" y="375"/>
<!-- track 6 -->
<use href="#a6" x="454" y="433"/><use href="#a6" x="584" y="433"/><use href="#a6" x="713" y="433"/><use href="#a6" x="843" y="433"/><use href="#s6" x="914" y="433"/><use href="#a6" x="973" y="433"/><use href="#s6" x="1044" y="433"/><use href="#a6" x="1103" y="433"/><use href="#s6" x="1173" y="433"/><use href="#a6" x="1233" y="433"/><use href="#s6" x="1304" y="433"/><use href="#a6" x="1364" y="433"/><use href="#s6" x="1434" y="433"/><use href="#a6" x="1492" y="433"/><use href="#s6" x="1564" y="433"/><use href="#a6" x="1622" y="433"/><use href="#a6" x="1720" y="433"/><use href="#a6" x="1778" y="433"/>
<!-- track 7 -->
<use href="#a7" x="506" y="491"/><use href="#b7" x="584" y="491"/><use href="#a7" x="765" y="491"/><use href="#b7" x="843" y="491"/><use href="#a7" x="895" y="491"/><use href="#b7" x="973" y="491"/><use href="#a7" x="1025" y="491"/><use href="#b7" x="1103" y="491"/><use href="#a7" x="1155" y="491"/><use href="#b7" x="1233" y="491"/><use href="#a7" x="1285" y="491"/><use href="#b7" x="1363" y="491"/><use href="#a7" x="1415" y="491"/><use href="#b7" x="1492" y="491"/><use href="#a7" x="1544" y="491"/><use href="#b7" x="1622" y="491"/>
<!-- track 8 -->
<use href="#p8" x="895" y="549"/><use href="#q8" x="960" y="549"/><use href="#r8" x="1025" y="549"/><use href="#u8" x="1090" y="549"/><use href="#p8" x="1155" y="549"/><use href="#q8" x="1220" y="549"/><use href="#r8" x="1285" y="549"/><use href="#v8" x="1350" y="549"/><use href="#t8" x="1414" y="549"/><use href="#x8" x="1479" y="549"/><use href="#t8" x="1544" y="549"/><use href="#x8" x="1609" y="549"/><use href="#y8" x="1674" y="549"/><use href="#z8" x="1752" y="549"/>
<!-- track 9 -->
<use href="#A9" x="908" y="607"/><use href="#B9" x="960" y="607"/><use href="#C9" x="1038" y="607"/><use href="#D9" x="1090" y="607"/><use href="#A9" x="1168" y="607"/><use href="#B9" x="1220" y="607"/><use href="#C9" x="1298" y="607"/><use href="#D9" x="1350" y="607"/><use href="#E9" x="1428" y="607"/><use href="#B9" x="1479" y="607"/><use href="#E9" x="1557" y="607"/><use href="#B9" x="1609" y="607"/><use href="#F9" x="1674" y="607"/><use href="#G9" x="1752" y="607"/>
<!-- track 10 -->
<use href="#A0" x="908" y="665"/><use href="#B0" x="960" y="665"/><use href="#C0" x="1038" y="665"/><use href="#D0" x="1090" y="665"/><use href="#A0" x="1168" y="665"/><use href="#B0" x="1220" y="665"/><use href="#C0" x="1298" y="665"/><use href="#D0" x="1350" y="665"/><use href="#E0" x="1428" y="665"/><use href="#B0" x="1479" y="665"/><use href="#E0" x="1557" y="665"/><use href="#B0" x="1609" y="665"/><use href="#F0" x="1674" y="665"/><use href="#G0" x="1752" y="665"/>
</g></g>
<!-- grid -->
<use href="#gm" clip-path="url(#gc)" stroke="#1a1a1a" stroke-dasharray="2 2"/>
<use href="#gh" clip-path="url(#gc)" stroke="#000" stroke-opacity=".2" stroke-dasharray="2 2"/>
<!-- header strip redrawn above the grid -->
<use href="#items" clip-path="url(#hr)"/>
<g clip-path="url(#ca)">
<text class="m" y="140.5" x="410 540 670 799 929 1059 1189 1319 1448 1578 1708 1812">MMMMMMMMMMMM</text>
<text class="fx" y="140.5" x="425">FX</text><text class="fx" y="140.5" x="555">FX</text><text class="fx" y="140.5" x="685">FX</text><text class="fx" y="140.5" x="814">FX</text><text class="fx" y="140.5" x="944">FX</text><text class="fx" y="140.5" x="1074">FX</text><text class="fx" y="140.5" x="1204">FX</text><text class="fx" y="140.5" x="1334">FX</text><text class="fx" y="140.5" x="1463">FX</text><text class="fx" y="140.5" x="1593">FX</text><text class="fx" y="140.5" x="1723">FX</text>
<text class="lb" y="140.5" x="436">01-Br...</text><text class="lb" y="140.5" x="566">01-Br...</text><text class="lb" y="140.5" x="696">01-Br...</text><text class="lb" y="140.5" x="825">01-Br...</text><text class="lb" y="140.5" x="955">01-Br...</text><text class="lb" y="140.5" x="1085">01-Br...</text><text class="lb" y="140.5" x="1215">01-Br...</text><text class="lb" y="140.5" x="1345">01-Br...</text><text class="lb" y="140.5" x="1474">01-Br...</text><text class="lb" y="140.5" x="1604">01-Br...</text><text class="lb" y="140.5" x="1734">01-Br...</text>
<text class="m" y="198.5" x="403 481 533 611 663 741 793 871 923 1001 1053 1131 1183 1261 1312 1390 1442 1520 1572 1650 1702 1754">MMMMMMMMMMMMMMMMMMMMMM</text>
<text class="m" y="256.5" x="403 481 533 611 663 741 793 871 923 1001 1053 1131 1183 1261 1312 1390 1442 1520 1572 1650 1702 1754">MMMMMMMMMMMMMMMMMMMMMM</text>
<text class="m" y="430.5" x="488 618 747 877 1007 1137 1267 1398 1526 1656 1754 1812">MMMMMMMMMMMM</text>
<text class="m" y="488.5" x="540 618 799 877 929 1007 1059 1137 1189 1267 1319 1397 1449 1526 1578 1656">MMMMMMMMMMMMMMMM</text>
<text class="m" y="546.5" x="929 1059 1124 1189 1319 1384 1448 1513 1578 1643 1708 1786">MMMMMMMMMMMM</text>
<text class="fx" y="546.5" x="1139">FX</text><text class="fx" y="546.5" x="1399">FX</text><text class="fx" y="546.5" x="1528">FX</text><text class="fx" y="546.5" x="1658">FX</text><text class="fx" y="546.5" x="1801">FX</text>
<text class="lb" y="546.5" x="1812">02</text>
</g>
<!-- edit cursor -->
<path d="M350.7 129V303M359 306.5H350.7V357H359M350.7 360V703" fill="none" stroke="#27a590" stroke-width="1.4"/>
<circle cx="1674.4" cy="316.3" r="3" fill="#fff" stroke="#111" stroke-width="1.2"/>

<!-- status & scroll -->
<path d="M2 704.5H342" stroke="#777" fill="none"/>
<rect x="351" y="703" width="1473" height="1.5" fill="#2a2a2a"/>
<text x="2" y="716" font-size="11" fill="#8f8f8f" textLength="171">Cymbal [input] MIDI: All: All channels</text>
<circle cx="358" cy="712" r="6" fill="#111"/><path d="M355.5 712L360 708.5V715.5Z" fill="#ddd"/>
<rect x="370" y="707" width="997" height="10.5" rx="4" fill="#565656"/><circle cx="375" cy="712" r="2.7" fill="#222"/><circle cx="1361.5" cy="712" r="2.7" fill="#222"/><rect x="867.5" y="709" width="1.4" height="6.5" fill="#111"/>

<!-- transport -->
<rect x="6" y="725" width="55" height="34" rx="17" fill="#2a2a2a"/><rect x="64" y="725" width="85" height="34" rx="17" fill="#2a2a2a"/><rect x="152" y="725" width="56" height="34" rx="17" fill="#2a2a2a"/>
<use href="#bd" x="21" y="742"/><use href="#bd" x="47" y="742"/><use href="#bd" x="135" y="742"/><use href="#bd" x="167" y="742"/><use href="#bd" x="193" y="742"/>
<path d="M17 737H19V747H17ZM19.5 742L26 737V747Z" fill="#a0a0a0"/><path d="M43 737L49.5 742L43 747ZM50 737H52V747H50Z" fill="#a0a0a0"/>
<circle cx="79" cy="742" r="14" fill="url(#rc)"/><circle cx="79" cy="742" r="6.5" fill="#a0505e" stroke="#d8a6ae" stroke-width="2.4"/>
<circle cx="109" cy="742" r="14" fill="url(#pl)"/><path d="M104 735V749L115 742Z" fill="#222"/>
<path d="M129 742a6 6 0 0 1 10-4.5M141 742a6 6 0 0 1-10 4.5" fill="none" stroke="#7a8280" stroke-width="2"/><path d="M140.5 734V739.5H135ZM129.5 750V744.5H135Z" fill="#7a8280"/>
<rect x="163" y="738" width="8" height="8" fill="#a0a0a0"/><path d="M189 737H192V747H189ZM194 737H197V747H194Z" fill="#a0a0a0"/>
<text x="220" y="750" font-size="22" font-weight="bold" fill="#a3a3a3" textLength="180">1.1.00 / 0:00.000</text>
<text x="585.7" y="747" font-size="16" fill="#8a8a8a" textLength="70">[Stopped]</text>

<rect x="1284" y="723" width="350" height="36" rx="6" fill="#262626"/>
<text class="sel" x="1294" y="745">Selection:</text><text class="sel" x="1381" y="745">7.3.00</text><text class="sel" x="1474" y="745">7.3.00</text><text class="sel" x="1568" y="745">0.0.00</text>
<rect x="1640" y="723" width="40" height="36" rx="6" fill="#262626"/><text class="sel" x="1652" y="745">4/4</text>
<rect x="1686" y="723" width="60" height="36" rx="6" fill="#262626"/>
<ellipse cx="1708" cy="737" rx="2.5" ry="2" fill="#8f989e"/><path d="M1710 736.5V728" stroke="#8f989e" stroke-width="1.2" fill="none"/><path d="M1717 732H1725M1717 735.5H1725" stroke="#8f989e" fill="none"/>
<text class="sel" x="1716" y="753" text-anchor="middle">60</text>
<rect x="1752" y="723" width="58" height="36" rx="6" fill="#262626"/>
<path d="M1760 735.5L1765 730.5L1770 734" fill="none" stroke="#a0a0a0" stroke-width="1.5"/><circle cx="1765" cy="731" r="1.8" fill="#a0a0a0"/><circle cx="1760" cy="735.5" r="1.4" fill="#a0a0a0"/><circle cx="1770" cy="734" r="1.4" fill="#a0a0a0"/>
<text x="1773.5" y="736" font-size="9.5" font-weight="bold" fill="#8f9896" textLength="27.5" lengthAdjust="spacingAndGlyphs">GLOBAL</text>
<rect x="1757.5" y="741" width="47" height="12" rx="6" fill="#3a3a3a"/><text x="1762.5" y="751" font-size="10" font-weight="bold" fill="#a8a8a8" textLength="11" lengthAdjust="spacingAndGlyphs">OFF</text>
<circle cx="1798" cy="747" r="6" fill="#777"/><path d="M1794.5 744.5H1801.5L1798 750.5Z" fill="#333"/>
<rect x="1819" y="723" width="6" height="36" rx="3" fill="#262626"/>

<!-- master -->
<text x="49.5" y="779" font-size="11" fill="#b5b5b5" text-anchor="middle">center</text>
<circle cx="49.7" cy="793" r="9.5" fill="#2a2a2a"/><circle cx="49.7" cy="792" r="9" fill="url(#kn)"/><circle cx="49.7" cy="786.5" r="1.3" fill="#111"/>
<rect x="6" y="810" width="94" height="195" fill="#2b2b2b"/>
<rect x="0" y="1005" width="100" height="20" fill="#2d2d2d"/><rect x="7" y="1025" width="62" height="1" fill="#777"/>
<text x="52.5" y="824" font-size="11" fill="#8f9a9e" text-anchor="middle">0.00dB</text>
<text x="23.7" y="842" font-size="11" fill="#8f9a9e" text-anchor="middle">-inf</text><text x="58.7" y="842" font-size="11" fill="#8f9a9e" text-anchor="middle">-inf</text>
<text class="sc" x="7" y="854">12</text><text class="sc" x="7" y="868">6</text><text class="sc" x="7" y="882">0-</text><text class="sc" x="7" y="896">6-</text><text class="sc" x="7" y="911">12-</text><text class="sc" x="7" y="925">18-</text><text class="sc" x="7" y="939">24-</text><text class="sc" x="7" y="954">30-</text><text class="sc" x="7" y="968">36-</text><text class="sc" x="7" y="983">42-</text>
<text class="sc" x="75" y="854" text-anchor="end">12</text><text class="sc" x="75" y="868" text-anchor="end">6</text><text class="sc" x="75" y="882" text-anchor="end">-0</text><text class="sc" x="75" y="896" text-anchor="end">-6</text><text class="sc" x="75" y="911" text-anchor="end">-12</text><text class="sc" x="75" y="925" text-anchor="end">-18</text><text class="sc" x="75" y="939" text-anchor="end">-24</text><text class="sc" x="75" y="954" text-anchor="end">-30</text><text class="sc" x="75" y="968" text-anchor="end">-36</text><text class="sc" x="75" y="983" text-anchor="end">-42</text>
<text class="sc" x="41" y="863" text-anchor="middle">-6-</text><text class="sc" x="41" y="892" text-anchor="middle">-18-</text><text class="sc" x="41" y="921" text-anchor="middle">-30-</text><text class="sc" x="41" y="950" text-anchor="middle">-42-</text><text class="sc" x="41" y="978" text-anchor="middle">-54-</text>
<rect x="6" y="993" width="70" height="12" fill="#222"/>
<text x="13" y="1004" font-size="10.5" font-weight="bold" fill="#1fa070">RMS</text><text x="58.7" y="1004" font-size="11" fill="#1fa070" text-anchor="middle">-inf</text>
<text x="52.7" y="1020" font-size="13" fill="#d0d4d6" text-anchor="middle" textLength="42" lengthAdjust="spacingAndGlyphs">MASTER</text>
<rect x="86.5" y="839" width="2.5" height="157" fill="#050505"/>
<use href="#fc" x="77.7" y="868"/>
<!-- master buttons -->
<rect x="106.7" y="770.7" width="19" height="18.6" rx="2" fill="url(#gb)" stroke="#1a1a1a"/><circle cx="114" cy="780" r="4.3" fill="none" stroke="#333" stroke-width="1.3"/><circle cx="118.5" cy="780" r="4.3" fill="none" stroke="#333" stroke-width="1.3"/>
<text class="lab" x="116" y="801" textLength="19" lengthAdjust="spacingAndGlyphs">MONO</text>
<rect x="106.7" y="806.7" width="19" height="19.3" rx="2" fill="url(#bt)" stroke="#141414"/><text class="tm" x="116" y="821">M</text>
<rect x="106.7" y="826.7" width="19" height="19.3" rx="2" fill="url(#bt)" stroke="#141414"/><text class="ts" x="116" y="841">S</text>
<rect x="106.7" y="852.7" width="19" height="19" rx="2" fill="#141414"/><path d="M108 871V861L110.5 853.5H114.5L110 871Z" fill="#18c8a8"/><path d="M111.5 871L116 853.5H120L115.5 871Z" fill="#f0d020"/><path d="M117 871L121.5 853.5H125V864L123 871Z" fill="#2c4a60"/>
<text class="lab" x="116" y="883" textLength="22" lengthAdjust="spacingAndGlyphs">ROUTE</text>
<rect x="106.7" y="890.7" width="19" height="18.6" rx="2" fill="url(#bt)" stroke="#141414"/><text x="116" y="904.5" font-size="12" fill="#c0c4c4" text-anchor="middle">FX</text>
<rect x="106.7" y="909.3" width="19" height="16.7" rx="2" fill="url(#gb)" stroke="#1a1a1a"/><use href="#pw" x="116" y="918.5" stroke="#222"/>
<rect x="106.7" y="932.7" width="19" height="19" rx="2" fill="url(#gb)" stroke="#1a1a1a"/><use href="#ti" x="116.5" y="942"/>
<text class="lab" x="116" y="964" textLength="14" lengthAdjust="spacingAndGlyphs">TRIM</text>
<rect x="106.7" y="970.7" width="19" height="18.6" rx="2" fill="url(#bt)" stroke="#141414"/><text x="116" y="985" font-size="14" font-weight="bold" fill="#c0c4c4" text-anchor="middle" style="font-family:'Liberation Serif',serif">i</text>

<!-- mixer channels -->
<use href="#ch" x="132"/><use href="#ch" x="220"/><use href="#ch" x="308"/><use href="#ch" x="396"/><use href="#ch" x="484"/><use href="#ch" x="572"/><use href="#ch" x="660"/><use href="#ch" x="748"/><use href="#ch" x="836"/><use href="#ch" x="924"/>
<rect x="397" y="764" width="87" height="30" fill="#b0b7b5"/><circle cx="439.6" cy="779" r="10" fill="#4f5453"/><circle cx="439.6" cy="778" r="9.5" fill="url(#kn)"/><circle cx="439.6" cy="772.3" r="1.4" fill="#111"/>
<rect x="397" y="981" width="87" height="24" fill="#c8cecc"/>
<circle cx="439.3" cy="1005" r="3.2" fill="#fff" stroke="#222"/>
<use href="#fc" x="164" y="830.7"/><use href="#fc" x="252" y="830.7"/><use href="#fc" x="340" y="830.7"/><use href="#fc" x="428" y="830.7"/><use href="#fc" x="516" y="833.3"/><use href="#fc" x="604" y="833.3"/><use href="#fc" x="692" y="830.7"/><use href="#fc" x="780" y="830.7"/><use href="#fc" x="868" y="852.7"/><use href="#fc" x="956" y="830.7"/>
<text class="tm" y="815" x="204 292 380 468 556 644 732 820 908 996">MMMMMMMMMM</text>
<text class="ts" y="835" x="204 292 380 468 556 644 732 820 908 996">SSSSSSSSSS</text>
<text class="tf" y="888" x="204">FX</text><text class="tf" y="888" x="292">FX</text><text class="tf" y="888" x="380">FX</text><text class="tf" y="888" x="468">FX</text><text class="tf" y="888" x="556">FX</text><text class="tf" y="888" x="644">FX</text><text class="tf" y="888" x="732">FX</text><text class="tf" y="888" x="820">FX</text><text class="tf" y="888" x="908">FX</text><text class="tf" y="888" x="996">FX</text>
<text class="inf" y="810" x="140">-inf</text><text class="inf" y="810" x="228">-inf</text><text class="inf" y="810" x="316">-inf</text><text class="inf" y="810" x="404">-inf</text><text class="inf" y="810" x="492">-inf</text><text class="inf" y="810" x="580">-inf</text><text class="inf" y="810" x="668">-inf</text><text class="inf" y="810" x="756">-inf</text><text class="inf" y="810" x="844">-inf</text><text class="inf" y="810" x="932">-inf</text>
<text class="cn" y="998" x="176" textLength="56.7" lengthAdjust="spacingAndGlyphs">Brass Pad</text><text class="cn" y="998" x="264" textLength="56" lengthAdjust="spacingAndGlyphs">Snare Hit</text><text class="cn" y="998" x="351.7" textLength="61.3" lengthAdjust="spacingAndGlyphs">Snare Roll</text><text y="998" x="439" font-size="14" fill="#2a2a2a" text-anchor="middle" textLength="45" lengthAdjust="spacingAndGlyphs">Cymbal</text><text class="cn" y="998" x="527.7" textLength="52.5" lengthAdjust="spacingAndGlyphs">Clankers</text><text class="cn" y="998" x="615.7" textLength="77.9" lengthAdjust="spacingAndGlyphs">Wood Swells</text><text class="cn" y="998" x="703" textLength="68.6" lengthAdjust="spacingAndGlyphs">Trash Crash</text><text class="cn" y="998" x="792" textLength="60.7" lengthAdjust="spacingAndGlyphs">Music Box</text><text class="cn" y="998" x="879.5" textLength="57.5" lengthAdjust="spacingAndGlyphs">Vocal Pad</text><text class="cn" y="998" x="968" textLength="39.6" lengthAdjust="spacingAndGlyphs">Voices</text>
<text class="tn" y="1020" x="174.3">1</text><text class="tn" y="1020" x="262.3">2</text><text class="tn" y="1020" x="350">3</text><text class="tn" y="1020" x="438.7">4</text><text class="tn" y="1020" x="526">5</text><text class="tn" y="1020" x="614.6">6</text><text class="tn" y="1020" x="702.5">7</text><text class="tn" y="1020" x="790">8</text><text class="tn" y="1020" x="878.3">9</text><text class="tn" y="1020" x="966">10</text>
</svg>
</body></html>
